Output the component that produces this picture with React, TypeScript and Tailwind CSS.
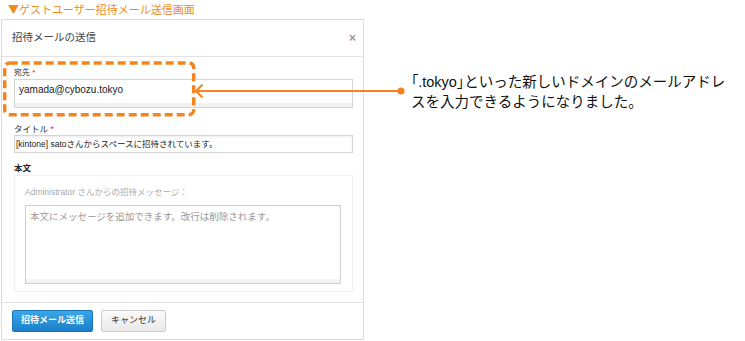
import React from 'react';

const ORANGE = '#f5841f';

const Overlay: React.FC = () => (
  <svg className="absolute inset-0 pointer-events-none" width="745" height="341" viewBox="0 0 745 341">
    <rect x="4.7" y="63" width="189" height="51.7" rx="5" fill="none" stroke={ORANGE} strokeWidth="3.5" strokeDasharray="8 4" />
    <line x1="197" y1="91" x2="401" y2="91" stroke={ORANGE} strokeWidth="1.8" />
    <polyline points="202.5,84.5 196,91 202.5,97.5" fill="none" stroke={ORANGE} strokeWidth="2" />
    <circle cx="401" cy="91" r="3.6" fill={ORANGE} />
  </svg>
);

export default function App() {
  return (
    <div className="relative w-[745px] h-[341px] bg-white overflow-hidden font-['Liberation_Sans','Noto_Sans_CJK_JP',sans-serif]">
      <div className="flex">
        <div className="w-[364px] pl-[1px]">
          <div className="h-[19px] pl-[7px] text-[11px] leading-[19px] text-[#f08a1c] font-['Noto_Sans_CJK_JP',sans-serif]">
            ▼ゲストユーザー招待メール送信画面
          </div>

          <div className="w-[363px] h-[321px] border border-[#dcdcdc] flex flex-col">
            <div className="h-[37px] border-b border-[#e2e2e2] flex items-center justify-between pl-[10px] pr-[7px]">
              <span className="text-[10.5px] text-[#444]">招待メールの送信</span>
              <span className="text-[12px] font-bold text-[#999] leading-none">×</span>
            </div>

            <div className="flex-1 pl-[12px] pr-[10px]">
              <div className="mt-[10px] text-[8px] leading-[12px] text-[#333]">
                宛先 <span className="text-[#e0281b]">*</span>
              </div>
              <div className="h-[29px] border border-[#d4d4d4] shadow-[inset_0_-4px_0_#f2f2f2] pl-[4px] pt-[3px] text-[10px] leading-[14px] text-[#222]">
                yamada@cybozu.tokyo
              </div>

              <div className="mt-[15px] text-[8.5px] leading-[12px] text-[#333]">
                タイトル <span className="text-[#e0281b]">*</span>
              </div>
              <div className="h-[18px] border border-[#d4d4d4] shadow-[inset_0_1px_2px_rgba(0,0,0,0.08)] pl-[1px] text-[8.5px] leading-[16px] text-[#222]">
                [kintone] satoさんからスペースに招待されています。
              </div>

              <div className="mt-[9px] text-[8.5px] leading-[12px] text-[#222] font-semibold">本文</div>
              <div className="mt-[1px] h-[117px] border border-[#f0f0f0] pl-[10px] pr-[11px] pt-[10px]">
                <div className="text-[8.5px] leading-[12px] text-[#aaa]">Administrator さんからの招待メッセージ：</div>
                <div className="mt-[7px] h-[79px] border border-[#cfcfcf] shadow-[inset_0_-4px_0_#f3f3f3] pl-[4px] pt-[4px] text-[9.5px] leading-[14px] text-[#999]">
                  本文にメッセージを追加できます。改行は削除されます。
                </div>
              </div>
            </div>

            <div className="h-[37px] border-t border-[#e2e2e2] flex items-center gap-[8px] pl-[10px]">
              <button className="w-[81px] h-[22px] rounded-[2px] border border-[#1a74b8] bg-gradient-to-b from-[#3aa6ea] to-[#1a7fc8] text-white text-[9px] font-bold">
                招待メール送信
              </button>
              <button className="w-[65px] h-[22px] rounded-[2px] border border-[#cacaca] bg-gradient-to-b from-[#fbfbfb] to-[#e9e9e9] text-[#333] text-[9px]">
                キャンセル
              </button>
            </div>
          </div>
        </div>

        <div className="pl-[47px] pt-[72px] text-[14.5px] leading-[20px] text-[#111] font-['Liberation_Sans','Noto_Sans_CJK_JP',sans-serif] whitespace-nowrap">
          <div>
            <span className="[font-feature-settings:'palt']">「</span>.tokyo<span className="[font-feature-settings:'palt']">」</span>といった新しいドメインのメールアドレ
          </div>
          <div>スを入力できるようになりました。</div>
        </div>
      </div>
      <Overlay />
    </div>
  );
}
